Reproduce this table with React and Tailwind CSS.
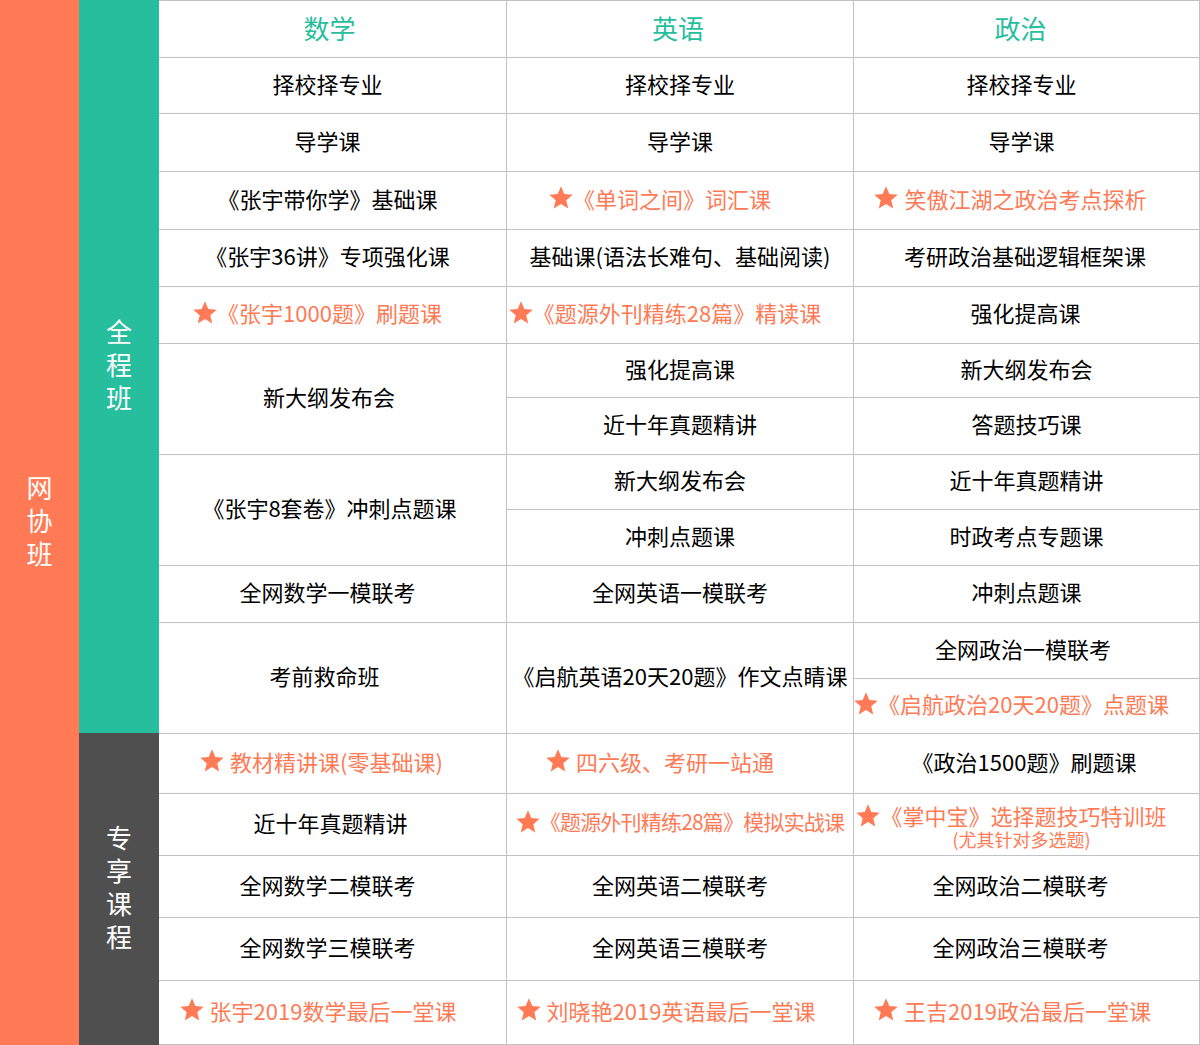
import React from "react";

const Star = () => (
  <svg width="24" height="23" viewBox="0 0 24 23" className="shrink-0" aria-hidden="true">
    <path
      d="M12 0.2 L15.3 8 L23.7 8.7 L17.3 14.2 L19.2 22.4 L12 18.1 L4.8 22.4 L6.7 14.2 L0.3 8.7 L8.7 8 Z"
      fill="#ff7a55"
    />
  </svg>
);

function Cell({ children, span, star, gap, className = "", inner = "" }) {
  return (
    <div
      className={
        "bg-white flex items-center justify-center whitespace-nowrap pb-[6px] " +
        (span ? "row-span-2 " : "") +
        className
      }
    >
      {star && <Star />}
      {star && gap && <span className="w-[6px]" />}
      <span className={(star ? "text-[#ff7a55] " : "text-black ") + inner}>{children}</span>
    </div>
  );
}

function Head({ children, className = "" }) {
  return (
    <div className={"bg-white flex items-center justify-center pb-[3px] " + className}>
      <span className="text-[26px] text-[#27be9d] leading-none">{children}</span>
    </div>
  );
}

function VLabel({ chars }) {
  return (
    <div className="flex flex-col items-center text-white text-[26px] leading-[33px] pb-[6px]">
      {chars.map((c, i) => (
        <span key={i}>{c}</span>
      ))}
    </div>
  );
}

export default function App() {
  return (
    <div className="flex w-[1200px] h-[1045px] bg-white font-['Noto_Sans_CJK_SC','Noto_Sans',sans-serif] text-[22px] leading-none">
      <div className="w-[79px] h-full bg-[#ff7a55] flex items-center justify-center">
        <VLabel chars={["网", "协", "班"]} />
      </div>
      <div className="w-[80px] h-full flex flex-col">
        <div className="h-[733px] bg-[#27be9d] flex items-center justify-center">
          <VLabel chars={["全", "程", "班"]} />
        </div>
        <div className="flex-1 bg-[#4f4f4f] flex items-center justify-center">
          <VLabel chars={["专", "享", "课", "程"]} />
        </div>
      </div>
      <div className="flex-1 h-full bg-[#c2c2c2] border-t border-r border-b border-[#c2c2c2] grid gap-px grid-cols-[347px_346px_1fr] grid-rows-[56px_55px_57px_57px_56px_56px_53px_56px_54px_55px_56px_55px_54px_59px_61px_61px_62px_63px]">
        <Head className="pr-[6px]">数学</Head>
        <Head className="pr-[4px]">英语</Head>
        <Head className="pr-[12px]">政治</Head>

        <Cell className="pr-[10px]">择校择专业</Cell>
        <Cell>择校择专业</Cell>
        <Cell className="pr-[10px]">择校择专业</Cell>

        <Cell className="pr-[10px]">导学课</Cell>
        <Cell>导学课</Cell>
        <Cell className="pr-[10px]">导学课</Cell>

        <Cell className="pr-[10px]">《张宇带你学》基础课</Cell>
        <Cell star className="pr-[40px]">《单词之间》词汇课</Cell>
        <Cell star gap className="pr-[32px]">笑傲江湖之政治考点探析</Cell>

        <Cell className="pr-[10px]">《张宇36讲》专项强化课</Cell>
        <Cell>基础课(语法长难句、基础阅读)</Cell>
        <Cell className="pr-[3px]">考研政治基础逻辑框架课</Cell>

        <Cell star className="pr-[30px]">《张宇1000题》刷题课</Cell>
        <Cell star className="pr-[30px]">《题源外刊精练28篇》精读课</Cell>
        <Cell className="pr-[2px]">强化提高课</Cell>

        <Cell span className="pr-[7px]">新大纲发布会</Cell>
        <Cell>强化提高课</Cell>
        <Cell>新大纲发布会</Cell>

        <Cell>近十年真题精讲</Cell>
        <Cell>答题技巧课</Cell>

        <Cell span className="pr-[6px]">《张宇8套卷》冲刺点题课</Cell>
        <Cell>新大纲发布会</Cell>
        <Cell>近十年真题精讲</Cell>

        <Cell>冲刺点题课</Cell>
        <Cell>时政考点专题课</Cell>

        <Cell className="pr-[10px]">全网数学一模联考</Cell>
        <Cell>全网英语一模联考</Cell>
        <Cell>冲刺点题课</Cell>

        <Cell span className="pr-[16px]">考前救命班</Cell>
        <Cell span>《启航英语20天20题》作文点睛课</Cell>
        <Cell className="pr-[7px]">全网政治一模联考</Cell>

        <Cell star className="pr-[30px]">《启航政治20天20题》点题课</Cell>

        <Cell star gap className="pr-[22px]">教材精讲课(零基础课)</Cell>
        <Cell star gap className="pr-[40px]">四六级、考研一站通</Cell>
        <Cell className="pr-[5px]">《政治1500题》刷题课</Cell>

        <Cell className="pr-[4px]">近十年真题精讲</Cell>
        <Cell star inner="tracking-[-0.8px] text-[21px]">《题源外刊精练28篇》模拟实战课</Cell>
        <div className="bg-white flex flex-col items-center justify-center pr-[30px] gap-[3px] pt-[2px]">
          <div className="flex items-center whitespace-nowrap h-[23px]">
            <Star />
            <span className="text-[#ff7a55]">《掌中宝》选择题技巧特训班</span>
          </div>
          <span className="text-[#ff7a55] text-[18px] leading-[18px] whitespace-nowrap ml-[20px]">(尤其针对多选题)</span>
        </div>

        <Cell className="pr-[10px]">全网数学二模联考</Cell>
        <Cell>全网英语二模联考</Cell>
        <Cell className="pr-[12px]">全网政治二模联考</Cell>

        <Cell className="pr-[10px]">全网数学三模联考</Cell>
        <Cell>全网英语三模联考</Cell>
        <Cell className="pr-[12px]">全网政治三模联考</Cell>

        <Cell star gap className="pr-[29px]">张宇2019数学最后一堂课</Cell>
        <Cell star gap className="pr-[28px]">刘晓艳2019英语最后一堂课</Cell>
        <Cell star gap className="pr-[28px]">王吉2019政治最后一堂课</Cell>
      </div>
    </div>
  );
}
